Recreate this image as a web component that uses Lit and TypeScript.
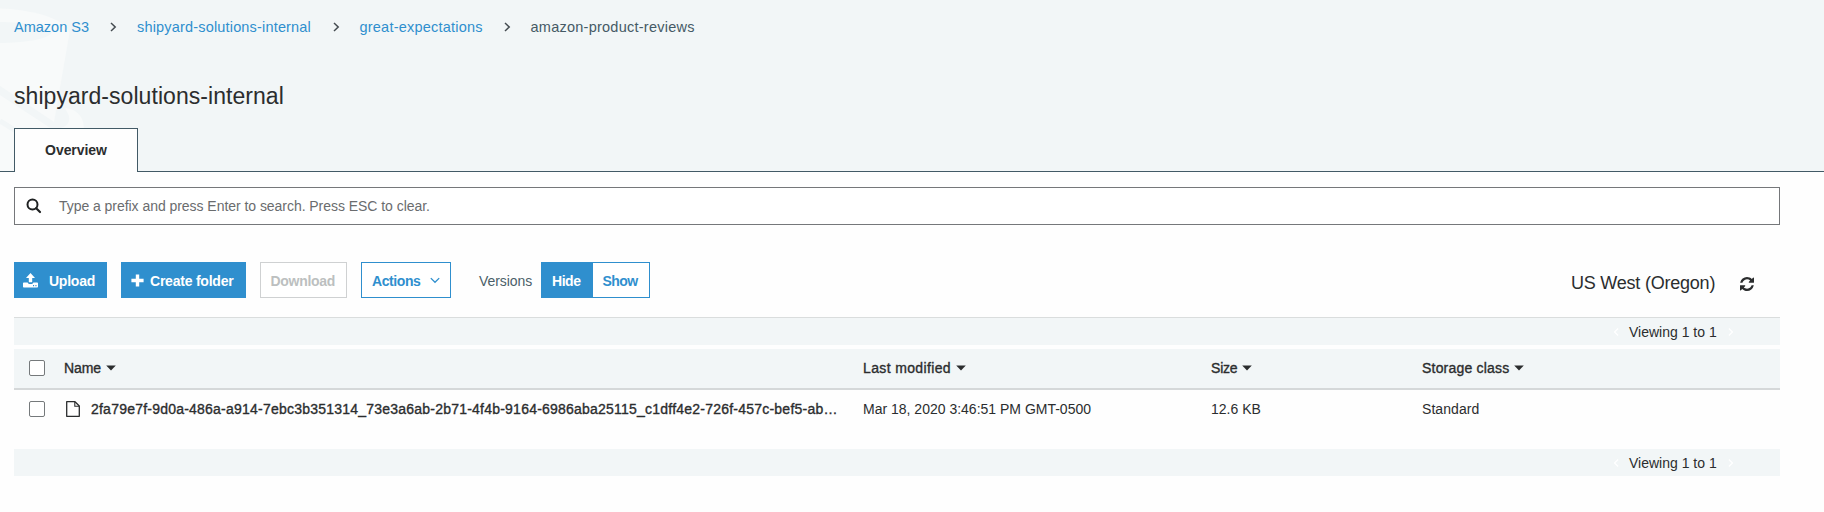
import { LitElement, html, css } from 'lit';
import { customElement } from 'lit/decorators.js';

const chevron = (cls: string) => html`<svg class="chev ${cls}" width="7" height="10" viewBox="0 0 7 10" aria-hidden="true">
  <path d="M1 1L5.2 5L1 9" fill="none" stroke="currentColor" stroke-width="1.5" /></svg>`;

const caret = html`<svg class="caret" width="10" height="6" viewBox="0 0 10 6" aria-hidden="true"><path d="M.2 .4H9.8L5 5.6Z" fill="currentColor" /></svg>`;

const searchIcon = html`<svg class="search-icon" width="16" height="16" viewBox="0 0 16 16" aria-hidden="true">
  <circle cx="6.5" cy="6.5" r="5" fill="none" stroke="currentColor" stroke-width="2" />
  <path d="M10.2 10.2L14 14" stroke="currentColor" stroke-width="2.2" stroke-linecap="round" /></svg>`;

const uploadIcon = html`<svg width="15" height="15" viewBox="0 0 15 15" aria-hidden="true">
  <path d="M7.5 0L12 4.9H9.2V9.3H5.8V4.9H3Z" fill="currentColor" />
  <path fill-rule="evenodd" d="M.8 9.5H4.7C4.9 10.4 5.5 10.9 6.3 10.9H8.7C9.5 10.9 10.1 10.4 10.3 9.5H14.2Q15 9.5 15 10.3V13.7Q15 14.5 14.2 14.5H.8Q0 14.5 0 13.7V10.3Q0 9.5 .8 9.5ZM10 12V13.3H11.1V12ZM12.4 12V13.3H13.5V12Z" fill="currentColor" /></svg>`;

const plusIcon = html`<svg width="13" height="13" viewBox="0 0 13 13" aria-hidden="true">
  <path d="M4.8 .4H8.2V4.8H12.6V8.2H8.2V12.6H4.8V8.2H.4V4.8H4.8Z" fill="currentColor" /></svg>`;

const downIcon = html`<svg class="down" width="10" height="7" viewBox="0 0 10 7" aria-hidden="true">
  <path d="M.8 1.1L5 5.3L9.2 1.1" fill="none" stroke="currentColor" stroke-width="1.3" /></svg>`;

const refreshIcon = html`<svg class="refresh" width="14" height="14" viewBox="0 0 1536 1536" aria-hidden="true">
  <path fill="currentColor" d="M1511 928q0 5-1 7-64 268-268 434.500T764 1536q-146 0-282.500-55T238 1324l-129 129q-19 19-45 19t-45-19-19-45V960q0-26 19-45t45-19h448q26 0 45 19t19 45-19 45l-137 137q71 66 161 102t187 36q134 0 250-65t186-179q11-17 53-117 8-23 30-23h192q13 0 22.500 9.500t9.500 22.500zm25-800v448q0 26-19 45t-45 19h-448q-26 0-45-19t-19-45 19-45l138-138Q969 256 768 256q-134 0-250 65T332 500q-11 17-53 117-8 23-30 23H50q-13 0-22.500-9.500T18 608v-7q65-268 270-434.500T768 0q146 0 284 55.500T1297 212l130-129q19-19 45-19t45 19 19 45z" /></svg>`;

const fileIcon = html`<svg class="file-icon" width="14" height="16" viewBox="0 0 14 16" aria-hidden="true">
  <path d="M.7 .7H9L13.3 5V15.3H.7Z" fill="#fff" stroke="currentColor" stroke-width="1.3" stroke-linejoin="round" />
  <path d="M8.800 .9V5.2H13.1" fill="none" stroke="currentColor" stroke-width="1.1" /></svg>`;

const bucket = html`<svg class="bucket" width="90" height="171" viewBox="0 0 90 171" aria-hidden="true">
  <path d="M0 8.500C28 9 66 18 69.500 33L54 122L0 86Z" fill="#f8fafa" />
  <path d="M0 22C24 22 49 26 52 32C50 39 24 43 0 43Z" fill="#f2f6f7" />
  <path d="M0 95L52 129L47 171H0Z" fill="#f8fafa" />
  <path d="M0 121L60 158" stroke="#f2f6f7" stroke-width="5" />
  <path d="M65 108C77 109 84 117 84 129H54C64 129 71 124 69 116Z" fill="#f8fafa" /></svg>`;

@customElement('app-root')
export class AppRoot extends LitElement {
  static styles = css`
    :host { display: block; height: 512px; background: #fefefe; color: #2b2d2e; overflow: hidden;
      font-family: "Liberation Sans", Arial, sans-serif; font-size: 14px; line-height: 18px; white-space: nowrap; }
    * { box-sizing: border-box; }
    svg { display: block; flex: none; }
    header { position: relative; height: 172px; background: #f2f6f7; border-bottom: 1px solid #425a66; padding-left: 14px; }
    .bucket { position: absolute; left: 0; top: 0; }
    .crumbs { position: relative; display: flex; align-items: center; padding-top: 18px; font-size: 14.5px; color: #455a65; }
    .crumbs a { color: #2f8fce; }
    .crumbs .chev { color: #444b50; margin: 0 20px 0 21px; }
    .c1 { width: 75px; }
    .c2 { width: 174.500px; letter-spacing: .176px; }
    .c3 { width: 123px; letter-spacing: .221px; }
    .c4 { letter-spacing: .247px; }
    h1 { position: relative; margin: 46px 0 0; font-size: 23px; font-weight: 400; line-height: 28px; letter-spacing: .05px; }
    .tab { position: relative; width: 124px; height: 44px; margin-top: 18px; padding-bottom: 2px; border: 1px solid #425a66; border-bottom: 0; background: #fefefe;
      display: flex; align-items: center; justify-content: center; font-weight: 700; letter-spacing: -.05px; }
    main { margin: 15px 44px 0 14px; }
    .search { height: 38px; border: 1px solid #75777a; background: #fff; display: flex; align-items: center; padding-left: 11px; color: #6a6c6e; letter-spacing: -.044px; }
    .search-icon { color: #1f2122; margin-right: 17px; }
    .tools { display: flex; align-items: center; margin-top: 37px; height: 36px; }
    .btn { height: 36px; border: 1px solid #2f8fce; background: #fff; color: #2f8fce; font-weight: 700; display: flex; align-items: center; margin-right: 14px; padding-top: 1px; }
    .solid { background: #2f8fce; color: #fff; }
    .up { width: 93px; padding-left: 8px; gap: 11px; letter-spacing: -.24px; }
    .create { width: 125px; padding-left: 8.500px; gap: 6.500px; letter-spacing: -.22px; }
    .download { width: 87px; padding-left: 9.500px; border-color: #cfd1d2; color: #bcbfc0; letter-spacing: -.3px; }
    .actions { width: 90px; padding-left: 10px; gap: 10px; letter-spacing: -.42px; }
    .versions { margin: 2px 8px 0 14px; width: 54px; color: #4b5f69; letter-spacing: -.06px; }
    .hide { width: 52px; margin: 0; padding-left: 10px; letter-spacing: -.45px; }
    .show { width: 57px; margin: 0; padding-left: 9.500px; border-left: 0; letter-spacing: -.55px; }
    .region { margin: 5px 24px 0 auto; font-size: 18px; line-height: 22px; letter-spacing: -.22px; width: 145px; }
    .refresh { margin: 8px 26px 0 0; }
    .pager { height: 27px; background: #f2f6f7; display: flex; align-items: center; justify-content: flex-end; padding-right: 46px; letter-spacing: 0; gap: 10px; }
    .pager .chev { color: #fff; width: 6px; }
    .pager .prev { transform: scaleX(-1); }
    .pager span { width: 88px; margin-right: 1px; }
    .top { height: 28px; margin-top: 19px; border-top: 1px solid #dadddd; }
    .row { display: grid; grid-template-columns: 50px 799px 348px 211px 1fr; align-items: center; height: 41px; }
    .head { margin-top: 4px; background: #f2f6f7; border-bottom: 2px solid #d5d8d9; padding-bottom: 1px; }
    .head .cell { display: flex; align-items: center; -webkit-text-stroke: .35px currentColor; }
    .caret { margin-left: 5px; }
    .box { width: 16px; height: 16px; margin-left: 15px; border: 1px solid #75797b; border-radius: 2px; background: #fff; }
    .item { height: 39px; padding-bottom: 1px; }
    .name { display: flex; align-items: center; }
    .file-icon { margin-left: 2px; margin-right: 11px; }
    .key { width: 747px; overflow: hidden; letter-spacing: .222px; -webkit-text-stroke: .35px currentColor; }
    .n { letter-spacing: -.08px; }
    .l { letter-spacing: .36px; }
    .s { letter-spacing: -.2px; }
    .st { letter-spacing: .2px; }
    .sd { letter-spacing: .06px; }
    .bottom { margin-top: 20px; }
  `;

  private pager(cls: string) {
    return html`<div class="pager ${cls}">${chevron('prev')}<span>Viewing 1 to 1</span>${chevron('')}</div>`;
  }

  render() {
    return html`
      <header>
        ${bucket}
        <nav class="crumbs">
          <a class="c1">Amazon S3</a>${chevron('')}<a class="c2">shipyard-solutions-internal</a>${chevron('')}<a class="c3">great-expectations</a>${chevron('')}<span class="c4">amazon-product-reviews</span>
        </nav>
        <h1>shipyard-solutions-internal</h1>
        <div class="tab">Overview</div>
      </header>
      <main>
        <div class="search">${searchIcon}<span>Type a prefix and press Enter to search. Press ESC to clear.</span></div>
        <div class="tools">
          <div class="btn solid up">${uploadIcon}<span>Upload</span></div>
          <div class="btn solid create">${plusIcon}<span>Create folder</span></div>
          <div class="btn download">Download</div>
          <div class="btn actions"><span>Actions</span>${downIcon}</div>
          <span class="versions">Versions</span>
          <div class="btn solid hide">Hide</div>
          <div class="btn show">Show</div>
          <span class="region">US West (Oregon)</span>${refreshIcon}
        </div>
        ${this.pager('top')}
        <div class="row head">
          <div class="box"></div>
          <div class="cell n">Name${caret}</div>
          <div class="cell l">Last modified${caret}</div>
          <div class="cell s">Size${caret}</div>
          <div class="cell st">Storage class${caret}</div>
        </div>
        <div class="row item">
          <div class="box"></div>
          <div class="name">${fileIcon}<span class="key">2fa79e7f-9d0a-486a-a914-7ebc3b351314_73e3a6ab-2b71-4f4b-9164-6986aba25115_c1dff4e2-726f-457c-bef5-ab…</span></div>
          <div>Mar 18, 2020 3:46:51 PM GMT-0500</div>
          <div>12.6 KB</div>
          <div class="sd">Standard</div>
        </div>
        ${this.pager('bottom')}
      </main>
    `;
  }
}
